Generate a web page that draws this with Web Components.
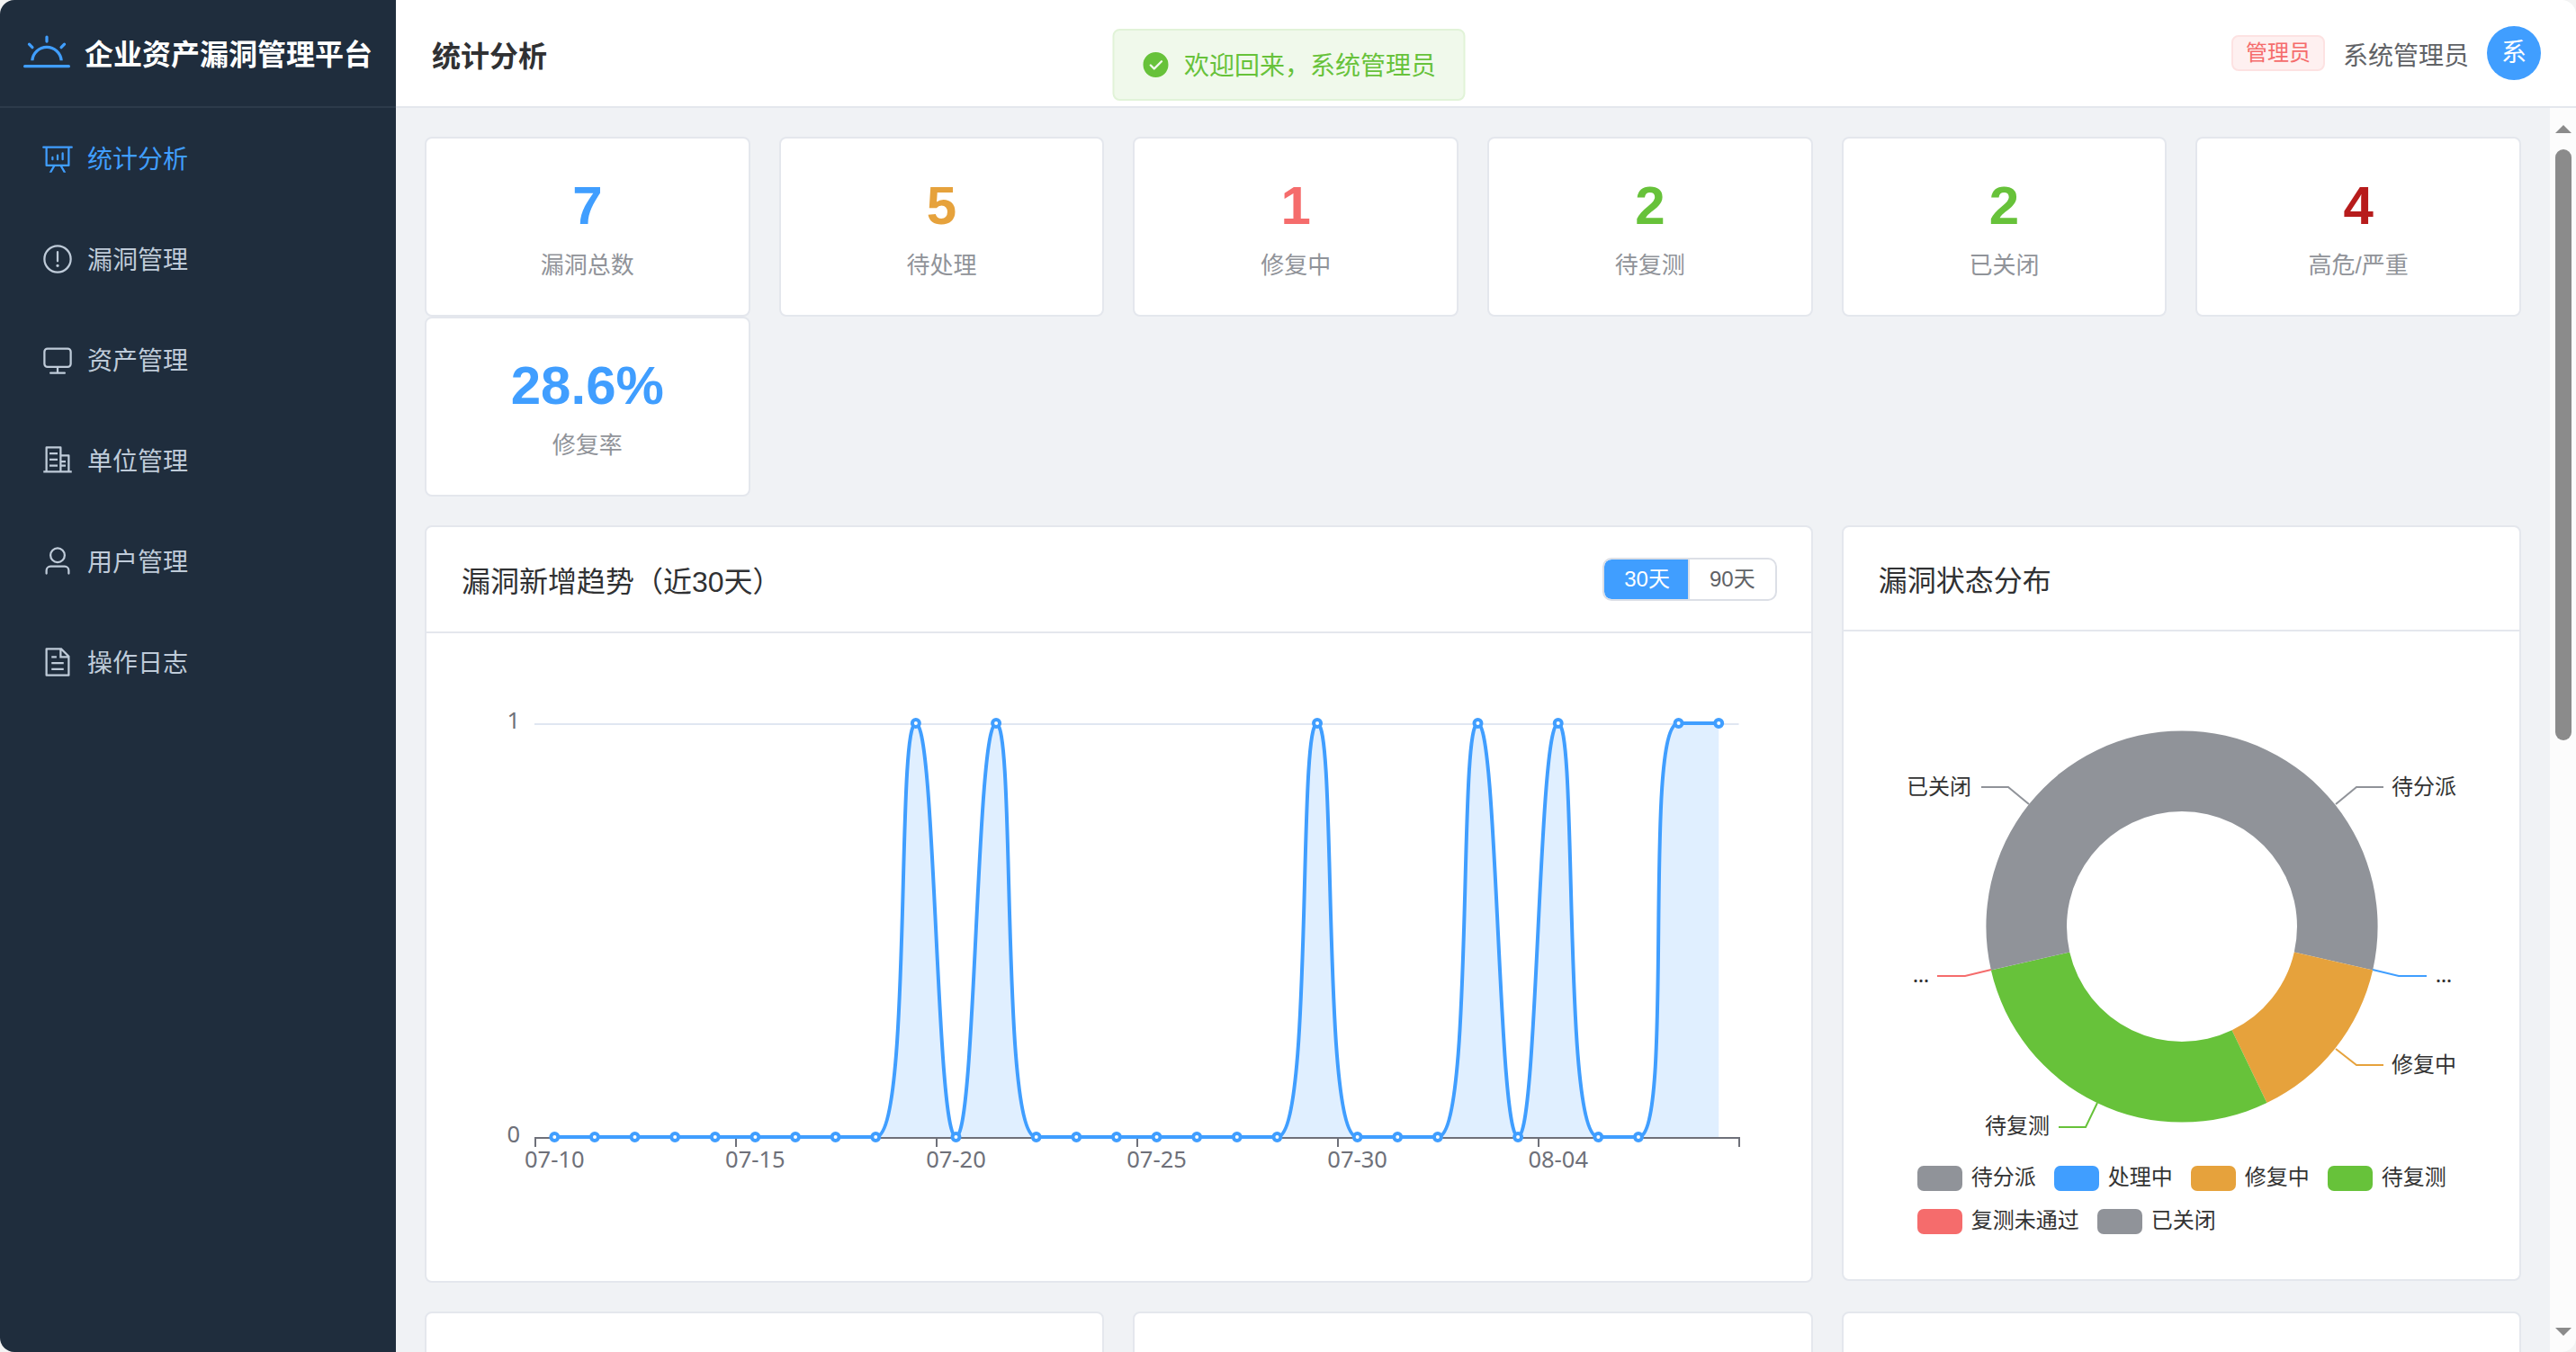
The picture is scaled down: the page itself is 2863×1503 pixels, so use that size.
<!DOCTYPE html>
<html lang="zh-CN">
<head>
<meta charset="UTF-8">
<title>企业资产漏洞管理平台</title>
<style>
html, body {
    margin: 0;
    height: 100%;
    overflow: hidden;
    background: #f3f3f3;
}
body {
    font-family: "Liberation Sans", "Noto Sans CJK SC", sans-serif;
    color: #303133;
}
</style>
</head>
<body>
<app-shell>
    <side-bar slot="aside" title="企业资产漏洞管理平台">
        <menu-item icon="analysis" active>统计分析</menu-item>
        <menu-item icon="warning">漏洞管理</menu-item>
        <menu-item icon="monitor">资产管理</menu-item>
        <menu-item icon="building">单位管理</menu-item>
        <menu-item icon="user">用户管理</menu-item>
        <menu-item icon="document">操作日志</menu-item>
    </side-bar>
    <page-header slot="header" role-name="管理员" user-name="系统管理员" avatar="系">统计分析</page-header>
    <stat-grid>
        <stat-card value="7" color="#409eff">漏洞总数</stat-card>
        <stat-card value="5" color="#e6a23c">待处理</stat-card>
        <stat-card value="1" color="#f56c6c">修复中</stat-card>
        <stat-card value="2" color="#67c23a">待复测</stat-card>
        <stat-card value="2" color="#67c23a">已关闭</stat-card>
        <stat-card value="4" color="#b71c1c">高危/严重</stat-card>
        <stat-card value="28.6%" color="#409eff">修复率</stat-card>
    </stat-grid>
    <chart-row columns="1542.67px 1fr">
        <chart-card style="--head: 116px">
            <span slot="title">漏洞新增趋势（近30天）</span>
            <radio-group slot="extra" options="30天,90天"></radio-group>
            <trend-chart values="0,0,0,0,0,0,0,0,0,1,0,1,0,0,0,0,0,0,0,1,0,0,0,1,0,1,0,0,1,1" labels="07-10,07-15,07-20,07-25,07-30,08-04"></trend-chart>
        </chart-card>
        <chart-card style="--head: 114px">
            <span slot="title">漏洞状态分布</span>
            <status-chart></status-chart>
        </chart-card>
    </chart-row>
    <chart-row columns="1fr 1fr 1fr">
        <chart-card></chart-card>
        <chart-card></chart-card>
        <chart-card></chart-card>
    </chart-row>
    <toast-message slot="toast">欢迎回来，系统管理员</toast-message>
</app-shell>

<script>
const ICONS = {
    sunrise: 'M32 768h960a32 32 0 1 1 0 64H32a32 32 0 1 1 0-64m129.408-96a352 352 0 0 1 701.184 0h-64.32a288 288 0 0 0-572.544 0zM512 128a32 32 0 0 1 32 32v96a32 32 0 0 1-64 0v-96a32 32 0 0 1 32-32m407.296 168.704a32 32 0 0 1 0 45.248l-67.84 67.84a32 32 0 1 1-45.248-45.248l67.84-67.84a32 32 0 0 1 45.248 0m-814.592 0a32 32 0 0 1 45.248 0l67.84 67.84a32 32 0 1 1-45.248 45.248l-67.84-67.84a32 32 0 0 1 0-45.248',
    analysis: 'm665.216 768 110.848 192h-73.856L591.36 768H433.024L322.176 960H248.32l110.848-192H160a32 32 0 0 1-32-32V192H64a32 32 0 0 1 0-64h896a32 32 0 1 1 0 64h-64v544a32 32 0 0 1-32 32zM832 192H192v512h640zM352 448a32 32 0 0 1 32 32v64a32 32 0 0 1-64 0v-64a32 32 0 0 1 32-32m160-64a32 32 0 0 1 32 32v128a32 32 0 0 1-64 0V416a32 32 0 0 1 32-32m160-64a32 32 0 0 1 32 32v192a32 32 0 1 1-64 0V352a32 32 0 0 1 32-32',
    warning: 'M512 64a448 448 0 1 1 0 896 448 448 0 0 1 0-896m0 832a384 384 0 0 0 0-768 384 384 0 0 0 0 768m48-176a48 48 0 1 1-96 0 48 48 0 0 1 96 0m-48-464a32 32 0 0 1 32 32v288a32 32 0 0 1-64 0V288a32 32 0 0 1 32-32',
    monitor: 'M544 768v128h192a32 32 0 1 1 0 64H288a32 32 0 1 1 0-64h192V768H192A128 128 0 0 1 64 640V256a128 128 0 0 1 128-128h640a128 128 0 0 1 128 128v384a128 128 0 0 1-128 128zM192 192a64 64 0 0 0-64 64v384a64 64 0 0 0 64 64h640a64 64 0 0 0 64-64V256a64 64 0 0 0-64-64z',
    building: 'M192 128v704h384V128zm-32-64h448a32 32 0 0 1 32 32v768a32 32 0 0 1-32 32H160a32 32 0 0 1-32-32V96a32 32 0 0 1 32-32M256 256h256v64H256zm0 192h256v64H256zm0 192h256v64H256zm384-128h128v64H640zm0 128h128v64H640zM64 832h896v64H64zM640 384v448h192V384zm-32-64h256a32 32 0 0 1 32 32v512a32 32 0 0 1-32 32H608a32 32 0 0 1-32-32V352a32 32 0 0 1 32-32',
    user: 'M512 512a192 192 0 1 0 0-384 192 192 0 0 0 0 384m0 64a256 256 0 1 1 0-512 256 256 0 0 1 0 512m320 320v-96a96 96 0 0 0-96-96H288a96 96 0 0 0-96 96v96a32 32 0 1 1-64 0v-96a160 160 0 0 1 160-160h448a160 160 0 0 1 160 160v96a32 32 0 1 1-64 0',
    document: 'M832 384H576V128H192v768h640zm-26.496-64L640 154.496V320zM160 64h480l256 256v608a32 32 0 0 1-32 32H160a32 32 0 0 1-32-32V96a32 32 0 0 1 32-32m160 448h384v64H320zm0-192h160v64H320zm0 384h384v64H320z',
    success: 'M512 64a448 448 0 1 1 0 896 448 448 0 0 1 0-896m-55.808 536.384-99.52-99.584a38.4 38.4 0 1 0-54.336 54.336l126.72 126.72a38.272 38.272 0 0 0 54.336 0l262.4-262.464a38.4 38.4 0 1 0-54.272-54.336z'
};

function icon(name, size) {
    return `<svg width="${size}" height="${size}" viewBox="0 0 1024 1024" fill="currentColor"><path d="${ICONS[name]}"/></svg>`;
}

class BaseElement extends HTMLElement {
    constructor() {
        super();
        this.attachShadow({mode: 'open'});
    }

    connectedCallback() {
        this.shadowRoot.innerHTML = this.render();
    }
}

class AppShell extends BaseElement {
    render() {
        return `
<style>
:host {
    display: flex;
    height: 100vh;
    border-radius: 16px;
    overflow: hidden;
    position: relative;
    background: #f0f2f5;
}
.page {
    flex: 1;
    min-width: 0;
    display: flex;
    flex-direction: column;
}
.view {
    flex: 1;
    min-height: 0;
    display: flex;
}
main {
    flex: 1;
    min-width: 0;
    overflow: hidden;
    box-sizing: border-box;
    padding: 32px 32px 0;
}
.scroll {
    width: 29px;
    box-sizing: border-box;
    padding: 19px 5px 18px 6px;
    background: #fcfcfc;
    display: flex;
    flex-direction: column;
    align-items: center;
}
.thumb {
    width: 18px;
    height: 657px;
    margin: 18px 0 auto;
    border-radius: 9px;
    background: #8b8b8b;
}
svg {
    display: block;
}
</style>
<slot name="aside"></slot>
<div class="page">
    <slot name="header"></slot>
    <div class="view">
        <main><slot></slot></main>
        <div class="scroll">
            <svg width="18" height="9"><path d="M0 9L9 0L18 9Z" fill="#8b8b8b"/></svg>
            <div class="thumb"></div>
            <svg width="18" height="9"><path d="M0 0L9 9L18 0Z" fill="#8b8b8b"/></svg>
        </div>
    </div>
</div>
<slot name="toast"></slot>`;
    }
}

class SideBar extends BaseElement {
    render() {
        return `
<style>
:host {
    display: block;
    width: 440px;
    flex: none;
    background: #1f2d3d;
}
.logo {
    display: flex;
    align-items: center;
    justify-content: center;
    gap: 16px;
    height: 118px;
    border-bottom: 2px solid #2c3a4b;
    color: #fff;
    font-size: 32px;
    font-weight: bold;
    white-space: nowrap;
}
.logo svg {
    color: #409eff;
}
.name {
    line-height: 44px;
    margin-top: 4px;
}
</style>
<div class="logo">${icon('sunrise', 52)}<span class="name">${this.getAttribute('title')}</span></div>
<slot></slot>`;
    }
}

class MenuItem extends BaseElement {
    render() {
        return `
<style>
:host {
    display: flex;
    align-items: center;
    height: 112px;
    padding-left: 46px;
    color: #bfcbd9;
    font-size: 28px;
}
:host([active]) {
    color: #409eff;
}
span {
    margin-left: 15px;
    padding-bottom: 3px;
}
</style>
${icon(this.getAttribute('icon'), 36)}<span><slot></slot></span>`;
    }
}

class PageHeader extends BaseElement {
    render() {
        return `
<style>
:host {
    display: flex;
    align-items: center;
    gap: 20px;
    height: 118px;
    flex: none;
    padding: 0 39px 0 40px;
    border-bottom: 2px solid #e4e7ed;
    background: #fff;
}
.title {
    flex: 1;
    font-size: 32px;
    font-weight: bold;
    padding-top: 1px;
}
.tag {
    height: 36px;
    line-height: 35px;
    padding: 0 14px;
    border: 2px solid #fde2e2;
    border-radius: 8px;
    background: #fef0f0;
    color: #f56c6c;
    font-size: 24px;
}
.user {
    font-size: 28px;
    color: #606266;
    padding-top: 1px;
}
.avatar {
    width: 60px;
    height: 60px;
    line-height: 60px;
    border-radius: 50%;
    background: #409eff;
    color: #fff;
    font-size: 28px;
    text-align: center;
}
</style>
<div class="title"><slot></slot></div>
<div class="tag">${this.getAttribute('role-name')}</div>
<div class="user">${this.getAttribute('user-name')}</div>
<div class="avatar">${this.getAttribute('avatar')}</div>`;
    }
}

class ToastMessage extends BaseElement {
    render() {
        return `
<style>
:host {
    position: absolute;
    top: 32px;
    left: 50%;
    transform: translateX(-195.5px);
    box-sizing: border-box;
    height: 80px;
    display: flex;
    align-items: center;
    gap: 16px;
    padding: 0 30px;
    border: 2px solid #e1f3d8;
    border-radius: 8px;
    background: #f0f9eb;
    color: #67c23a;
    font-size: 28px;
    white-space: nowrap;
}
span {
    padding-bottom: 3px;
}
</style>
${icon('success', 32)}<span><slot></slot></span>`;
    }
}

class StatGrid extends BaseElement {
    render() {
        return `
<style>
:host {
    display: grid;
    grid-template-columns: repeat(6, 1fr);
    column-gap: 32px;
    margin-bottom: 32px;
}
</style>
<slot></slot>`;
    }
}

class StatCard extends BaseElement {
    render() {
        return `
<style>
:host {
    display: flex;
    flex-direction: column;
    align-items: center;
    box-sizing: border-box;
    height: 200px;
    padding-top: 40px;
    border: 2px solid #e4e7ed;
    border-radius: 8px;
    background: #fff;
}
.value {
    font-size: 60px;
    font-weight: bold;
    line-height: 70px;
    color: ${this.getAttribute('color')};
}
.label {
    margin-top: 12px;
    font-size: 26px;
    line-height: 38px;
    color: #909399;
}
</style>
<div class="value">${this.getAttribute('value')}</div>
<div class="label"><slot></slot></div>`;
    }
}

class ChartRow extends BaseElement {
    render() {
        return `
<style>
:host {
    display: grid;
    grid-template-columns: ${this.getAttribute('columns')};
    column-gap: 32px;
    align-items: start;
    margin-bottom: 32px;
}
</style>
<slot></slot>`;
    }
}

class ChartCard extends BaseElement {
    render() {
        return `
<style>
:host {
    display: block;
    min-width: 0;
    min-height: 200px;
    box-sizing: border-box;
    border: 2px solid #e4e7ed;
    border-radius: 8px;
    background: #fff;
}
header {
    display: flex;
    align-items: center;
    justify-content: space-between;
    box-sizing: content-box;
    height: var(--head);
    padding: 0 38px 0 39px;
    border-bottom: 2px solid #e4e7ed;
    font-size: 32px;
}
.body {
    padding: 40px;
}
</style>
${this.children.length ? '<header><slot name="title"></slot><slot name="extra"></slot></header><div class="body"><slot></slot></div>' : ''}`;
    }
}

class RadioGroup extends BaseElement {
    render() {
        const items = this.getAttribute('options').split(',');
        return `
<style>
:host {
    display: flex;
    box-sizing: border-box;
    height: 48px;
    border: 2px solid #dcdfe6;
    border-radius: 10px;
    overflow: hidden;
    font-size: 24px;
    line-height: 44px;
    color: #606266;
}
span {
    padding: 0 22px;
}
.active {
    padding-right: 20px;
    border-radius: 8px 0 0 8px;
    background: #409eff;
    color: #fff;
}
span + span {
    border-left: 2px solid #dcdfe6;
}
</style>
${items.map((item, i) => `<span${i === 0 ? ' class="active"' : ''}>${item}</span>`).join('')}`;
    }
}

const LEFT = 80;
const RIGHT = 1418.5;
const TOP = 60;
const BOTTOM = 520;

class TrendChart extends BaseElement {
    // cubic smoothing, control points are kept inside the neighbouring segment
    smoothPath(pts) {
        const clamp = (v, a, b) => Math.max(Math.min(v, Math.max(a, b)), Math.min(a, b));
        const dist = (a, b) => Math.hypot(a[0] - b[0], a[1] - b[1]);
        let d = `M${pts[0]}`;
        let cp0 = pts[0];
        for (let i = 1; i < pts.length; i++) {
            const prev = pts[i - 1];
            const cur = pts[i];
            const next = pts[i + 1];
            let cp1 = cur;
            let nextCp = cur;
            if (next) {
                const lenPrev = dist(prev, cur);
                const lenNext = dist(cur, next);
                const ratio = lenNext / (lenNext + lenPrev);
                nextCp = [0, 1].map(k => clamp(cur[k] + (next[k] - prev[k]) * 0.5 * ratio, cur[k], next[k]));
                cp1 = [0, 1].map(k => clamp(cur[k] - (nextCp[k] - cur[k]) * lenPrev / lenNext, prev[k], cur[k]));
                nextCp = [0, 1].map(k => cur[k] + (cur[k] - cp1[k]) * lenNext / lenPrev);
            }
            d += `C${cp0} ${cp1} ${cur}`;
            cp0 = nextCp;
        }
        return d;
    }

    render() {
        const values = this.getAttribute('values').split(',').map(Number);
        const labels = this.getAttribute('labels').split(',');
        const step = (RIGHT - LEFT) / values.length;
        const pts = values.map((v, i) => [LEFT + step * (i + 0.5), BOTTOM - v * (BOTTOM - TOP)]);
        const line = this.smoothPath(pts);
        const last = pts[pts.length - 1];
        let ticks = '';
        for (let i = 0; i <= values.length; i += 5) {
            ticks += `<path d="M${Math.floor(LEFT + step * i) + 1} 521v10"/>`;
        }
        return `
<style>
:host {
    display: block;
    height: 640px;
}
svg {
    display: block;
    overflow: visible;
}
text {
    font-family: "Noto Sans", "Noto Sans CJK SC", sans-serif;
    font-size: 25.5px;
    fill: #6e7079;
}
</style>
<svg width="1454" height="640">
    <path d="M${LEFT} 61H${RIGHT}" stroke="#e0e6f1" stroke-width="2"/>
    <g stroke="#6e7079" stroke-width="2"><path d="M${LEFT} 521H1420"/>${ticks}</g>
    <path d="${line}L${last[0]} ${BOTTOM}L${pts[0]}Z" fill="#409eff" fill-opacity="0.16"/>
    <path d="${line}" fill="none" stroke="#409eff" stroke-width="4" stroke-linejoin="bevel"/>
    <g fill="#fff" stroke="#409eff" stroke-width="4">${pts.map(p => `<circle cx="${p[0]}" cy="${p[1]}" r="4"/>`).join('')}</g>
    <text x="64" y="66" text-anchor="end">1</text>
    <text x="64" y="526" text-anchor="end">0</text>
    ${labels.map((t, i) => `<text x="${pts[i * 5][0]}" y="554" text-anchor="middle">${t}</text>`).join('')}
</svg>`;
    }
}

const STATUSES = [
    {name: '待分派', value: 2, color: '#909399', label: '待分派', line: '507,152 530,133 560,133', x: 569, y: 141},
    {name: '处理中', value: 0, color: '#409eff', label: '...', line: '548,336 577,343 608,343', x: 618, y: 350},
    {name: '修复中', value: 1, color: '#e6a23c', label: '修复中', line: '507,424 530,442 560,442', x: 569, y: 450},
    {name: '待复测', value: 2, color: '#67c23a', label: '待复测', line: '242,484 229,511 199,511', x: 189, y: 518, end: true},
    {name: '复测未通过', value: 0, color: '#f56c6c', label: '...', line: '124,336 95,343 64,343', x: 55, y: 350, end: true},
    {name: '已关闭', value: 2, color: '#909399', label: '已关闭', line: '166,152 143,133 113,133', x: 102, y: 141, end: true}
];

class StatusChart extends BaseElement {
    slices() {
        const total = STATUSES.reduce((sum, s) => sum + s.value, 0);
        const at = (r, a) => `${336 + r * Math.sin(a)} ${288 + r * Math.cos(a) * -1}`;
        let angle = 0;
        let out = '';
        for (const s of STATUSES) {
            if (!s.value) continue;
            const end = angle + s.value / total * Math.PI * 2;
            out += `<path fill="${s.color}" d="M${at(217.6, angle)}A217.6 217.6 0 0 1 ${at(217.6, end)}L${at(128, end)}A128 128 0 0 0 ${at(128, angle)}Z"/>`;
            angle = end;
        }
        return out;
    }

    render() {
        return `
<style>
:host {
    display: flex;
    flex-direction: column;
    height: 640px;
}
svg {
    display: block;
    overflow: visible;
    flex: none;
}
text {
    font-size: 24px;
    fill: #333;
}
.dots {
    font-family: "Noto Sans", sans-serif;
    font-size: 22px;
    font-weight: 500;
}
ul {
    display: flex;
    flex-wrap: wrap;
    gap: 20px;
    width: 600px;
    margin: 14px 0 0 42px;
    padding: 0;
    list-style: none;
    font-size: 24px;
    line-height: 28px;
    color: #333;
}
li {
    display: flex;
    align-items: center;
    gap: 10px;
    height: 28px;
}
i {
    width: 50px;
    height: 28px;
    border-radius: 7px;
}
li span {
    margin-top: -3px;
}
</style>
<svg width="671" height="540">
    ${this.slices()}
    ${STATUSES.map(s => `
    <polyline points="${s.line}" fill="none" stroke="${s.color}" stroke-width="2"/>
    <text x="${s.x}" y="${s.y}"${s.end ? ' text-anchor="end"' : ''}${s.value ? '' : ' class="dots"'}>${s.label}</text>`).join('')}
</svg>
<ul>${STATUSES.map(s => `<li><i style="background: ${s.color}"></i><span>${s.name}</span></li>`).join('')}</ul>`;
    }
}

customElements.define('app-shell', AppShell);
customElements.define('side-bar', SideBar);
customElements.define('menu-item', MenuItem);
customElements.define('page-header', PageHeader);
customElements.define('toast-message', ToastMessage);
customElements.define('stat-grid', StatGrid);
customElements.define('stat-card', StatCard);
customElements.define('chart-row', ChartRow);
customElements.define('chart-card', ChartCard);
customElements.define('radio-group', RadioGroup);
customElements.define('trend-chart', TrendChart);
customElements.define('status-chart', StatusChart);
</script>
</body>
</html>
